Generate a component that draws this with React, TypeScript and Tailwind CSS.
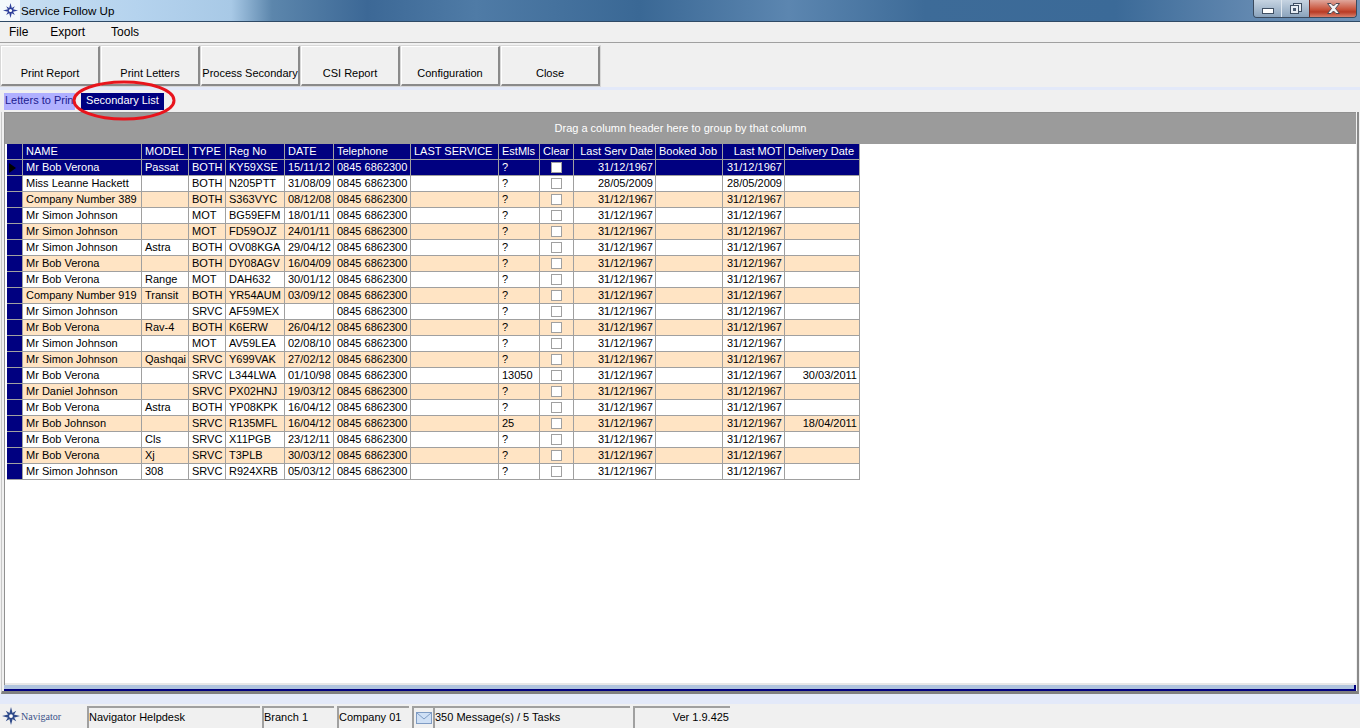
const rows = [
  ["Mr Bob Verona", "Passat", "BOTH", "KY59XSE", "15/11/12", "?", "31/12/1967", "31/12/1967", ""],
  ["Miss Leanne Hackett", "", "BOTH", "N205PTT", "31/08/09", "?", "28/05/2009", "28/05/2009", ""],
  ["Company Number 389", "", "BOTH", "S363VYC", "08/12/08", "?", "31/12/1967", "31/12/1967", ""],
  ["Mr Simon Johnson", "", "MOT", "BG59EFM", "18/01/11", "?", "31/12/1967", "31/12/1967", ""],
  ["Mr Simon Johnson", "", "MOT", "FD59OJZ", "24/01/11", "?", "31/12/1967", "31/12/1967", ""],
  ["Mr Simon Johnson", "Astra", "BOTH", "OV08KGA", "29/04/12", "?", "31/12/1967", "31/12/1967", ""],
  ["Mr Bob Verona", "", "BOTH", "DY08AGV", "16/04/09", "?", "31/12/1967", "31/12/1967", ""],
  ["Mr Bob Verona", "Range", "MOT", "DAH632", "30/01/12", "?", "31/12/1967", "31/12/1967", ""],
  ["Company Number 919", "Transit", "BOTH", "YR54AUM", "03/09/12", "?", "31/12/1967", "31/12/1967", ""],
  ["Mr Simon Johnson", "", "SRVC", "AF59MEX", "", "?", "31/12/1967", "31/12/1967", ""],
  ["Mr Bob Verona", "Rav-4", "BOTH", "K6ERW", "26/04/12", "?", "31/12/1967", "31/12/1967", ""],
  ["Mr Simon Johnson", "", "MOT", "AV59LEA", "02/08/10", "?", "31/12/1967", "31/12/1967", ""],
  ["Mr Simon Johnson", "Qashqai", "SRVC", "Y699VAK", "27/02/12", "?", "31/12/1967", "31/12/1967", ""],
  ["Mr Bob Verona", "", "SRVC", "L344LWA", "01/10/98", "13050", "31/12/1967", "31/12/1967", "30/03/2011"],
  ["Mr Daniel Johnson", "", "SRVC", "PX02HNJ", "19/03/12", "?", "31/12/1967", "31/12/1967", ""],
  ["Mr Bob Verona", "Astra", "BOTH", "YP08KPK", "16/04/12", "?", "31/12/1967", "31/12/1967", ""],
  ["Mr Bob Johnson", "", "SRVC", "R135MFL", "16/04/12", "25", "31/12/1967", "31/12/1967", "18/04/2011"],
  ["Mr Bob Verona", "Cls", "SRVC", "X11PGB", "23/12/11", "?", "31/12/1967", "31/12/1967", ""],
  ["Mr Bob Verona", "Xj", "SRVC", "T3PLB", "30/03/12", "?", "31/12/1967", "31/12/1967", ""],
  ["Mr Simon Johnson", "308", "SRVC", "R924XRB", "05/03/12", "?", "31/12/1967", "31/12/1967", ""],
]

const headers = [
  { label: "NAME", w: "w-[119px]", right: false },
  { label: "MODEL", w: "w-[47px]", right: false },
  { label: "TYPE", w: "w-[37px]", right: false },
  { label: "Reg No", w: "w-[59px]", right: false },
  { label: "DATE", w: "w-[49px]", right: false },
  { label: "Telephone", w: "w-[77px]", right: false },
  { label: "LAST SERVICE", w: "w-[88px]", right: false },
  { label: "EstMls", w: "w-[41px]", right: false },
  { label: "Clear", w: "w-[34px]", right: false },
  { label: "Last Serv Date", w: "w-[82px]", right: true },
  { label: "Booked Job", w: "w-[67px]", right: false },
  { label: "Last MOT", w: "w-[62px]", right: true },
  { label: "Delivery Date", w: "w-[75px]", right: false },
]

const toolbar = ["Print Report", "Print Letters", "Process Secondary", "CSI Report", "Configuration", "Close"]

function Cell({ w, right, children }: { w: string; right?: boolean; children?: React.ReactNode }) {
  return (
    <div
      className={`${w} h-full shrink-0 border-r border-b border-[#a0a0a0] pl-[3px] pr-[2px] leading-[15px] whitespace-nowrap overflow-hidden ${right ? "text-right" : ""}`}
    >
      {children}
    </div>
  )
}

function GridRow({ row, index }: { row: string[]; index: number }) {
  const selected = index === 0
  const bg = selected ? "bg-[#000080] text-white" : index % 2 === 0 ? "bg-[#ffe4c4] text-black" : "bg-white text-black"
  const [name, model, type, reg, date, est, serv, mot, delivery] = row
  return (
    <div className={`flex h-[16px] ${bg}`}>
      <div className="w-[16px] h-full shrink-0 bg-[#000080] border-r border-b border-[#a0a0a0] flex items-center pl-[2px]">
        {selected && (
          <svg width="7" height="10" viewBox="0 0 7 10">
            <path d="M0 0 L7 5 L0 10 Z" fill="#000" />
          </svg>
        )}
      </div>
      <Cell w="w-[119px]">{name}</Cell>
      <Cell w="w-[47px]">{model}</Cell>
      <Cell w="w-[37px]">{type}</Cell>
      <Cell w="w-[59px]">{reg}</Cell>
      <Cell w="w-[49px]">{date}</Cell>
      <Cell w="w-[77px]">0845 6862300</Cell>
      <Cell w="w-[88px]" />
      <Cell w="w-[41px]">{est}</Cell>
      <div className="w-[34px] h-full shrink-0 border-r border-b border-[#a0a0a0] flex items-center justify-center">
        <div className="w-[11px] h-[11px] bg-white border border-[#a0a0a0]" />
      </div>
      <Cell w="w-[82px]" right>
        {serv}
      </Cell>
      <Cell w="w-[67px]" />
      <Cell w="w-[62px]" right>
        {mot}
      </Cell>
      <Cell w="w-[75px]" right>
        {delivery}
      </Cell>
    </div>
  )
}

function Compass({ size, color }: { size: number; color: string }) {
  return (
    <svg width={size} height={size} viewBox="0 0 24 24">
      <path d="M12 0 L14.5 9.5 L24 12 L14.5 14.5 L12 24 L9.5 14.5 L0 12 L9.5 9.5 Z" fill={color} />
      <path d="M5 5 L12 9 L19 5 L15 12 L19 19 L12 15 L5 19 L9 12 Z" fill={color} />
      <circle cx="12" cy="12" r="2.5" fill="#fff" />
    </svg>
  )
}

export default function App() {
  return (
    <div className="relative w-[1360px] h-[728px] overflow-hidden flex flex-col bg-[#f0f0f0] font-['Liberation_Sans',Arial,sans-serif] text-[11px] text-black">
      {/* Title bar */}
      <div className="h-[21px] shrink-0 flex items-center justify-between bg-[linear-gradient(90deg,#c9dff2_0%,#b5d3ee_10%,#a8c9e6_17%,#5c86ac_20%,#3c6896_27%,#4f7ba6_35%,#3a6895_47%,#5c86b0_58%,#3d6b98_68%,#3b6a98_82%,#6288b0_92%,#6f93b8_100%)]">
        <div className="flex items-center h-full">
          <div className="w-[20px] h-full bg-white/80 flex items-center justify-center">
            <Compass size={15} color="#2f3f9a" />
          </div>
          <span className="ml-[1px] text-[11.6px]">Service Follow Up</span>
        </div>
        <div className="flex h-[18px] mr-[3px] self-start border border-t-0 border-[#3a4a5e] rounded-b-[4px] overflow-hidden">
          <div className="w-[28px] flex items-center justify-center border-r border-[#dfe7ef] bg-[linear-gradient(180deg,#c6d4e2,#8ba3bc)]">
            <svg width="12" height="6" viewBox="0 0 12 6" className="mt-[4px]">
              <rect x="0.5" y="0.5" width="11" height="5" fill="#fff" stroke="#3f4f63" />
            </svg>
          </div>
          <div className="w-[27px] flex items-center justify-center bg-[linear-gradient(180deg,#c6d4e2,#8ba3bc)]">
            <svg width="12" height="11" viewBox="0 0 12 11">
              <rect x="3.5" y="0.5" width="8" height="8" fill="#e8eef4" stroke="#3f4f63" />
              <rect x="0.5" y="2.5" width="8" height="8" fill="#e8eef4" stroke="#3f4f63" />
              <rect x="3" y="5" width="3" height="3" fill="#4b5c72" />
            </svg>
          </div>
          <div className="w-[47px] flex items-center justify-center border-l border-[#7a2a20] bg-[linear-gradient(180deg,#e0a79c,#c9543c_55%,#b83a24_70%,#d9806c)]">
            <svg width="13" height="11" viewBox="0 0 13 11">
              <path
                d="M0.5 0.5 H4 L6.5 3 L9 0.5 H12.5 L8.5 5.5 L12.5 10.5 H9 L6.5 8 L4 10.5 H0.5 L4.5 5.5 Z"
                fill="#f4f4f4"
                stroke="#4a4a55"
              />
            </svg>
          </div>
        </div>
      </div>
      <div className="h-px shrink-0 bg-[#2f4a66]" />

      {/* Menu */}
      <div className="h-[20px] shrink-0 flex items-center bg-[#f0f0f0] border-b border-[#a0a0a0] box-content text-[12px]">
        <span className="ml-[9px]">File</span>
        <span className="ml-[22px]">Export</span>
        <span className="ml-[26px]">Tools</span>
      </div>

      {/* Toolbar */}
      <div className="h-[44px] shrink-0 flex items-start pt-[3px] pl-[1px]">
        {toolbar.map((label) => (
          <div
            key={label}
            className="w-[99px] h-[40px] mr-[1px] bg-[#f0f0f0] border-t border-l border-white border-r-2 border-b-2 border-r-[#8a8a8a] border-b-[#8a8a8a] flex items-end justify-center pb-[3px] whitespace-nowrap shadow-[0_0_0_1px_#d8d8d8]"
          >
            {label}
          </div>
        ))}
      </div>
      <div className="h-[3px] shrink-0 bg-[#e3e9f9]" />

      {/* Tabs */}
      <div className="h-[22px] shrink-0 flex items-start pl-[4px] pt-[3px]">
        <div className="w-[71px] h-[17px] bg-[#b0b0ff] text-[#202090] leading-[15px] pl-[1px] whitespace-nowrap">Letters to Prin</div>
        <div className="w-[6px]" />
        <div className="w-[83px] h-[17px] bg-[#000080] text-white leading-[15px] text-center">Secondary List</div>
      </div>

      {/* Grid panel */}
      <div className="h-[582px] shrink-0 ml-[1px] mr-[1px] flex flex-col border-l border-[#c8c8c8] border-r-2 border-r-[#8a8a8a] border-b-[3px] border-b-[#808080] pl-[2px]">
        <div className="flex-1 flex flex-col min-h-0 bg-white border-l border-t border-[#909090] mr-[1px]">
          <div className="h-[31px] shrink-0 bg-[#9b9b9b] text-white flex items-center justify-center">
            Drag a column header here to group by that column
          </div>
          <div className="flex-1 pl-[2px] min-h-0">
            <div className="flex h-[16px] bg-[#000080] text-white w-[853px]">
              <div className="w-[16px] h-full shrink-0 border-r border-b border-[#a0a0a0]" />
              {headers.map((h) => (
                <Cell key={h.label} w={h.w} right={h.right}>
                  {h.label}
                </Cell>
              ))}
            </div>
            <div className="w-[853px]">
              {rows.map((row, i) => (
                <GridRow key={i} row={row} index={i} />
              ))}
            </div>
          </div>
          <div className="h-[2px] shrink-0 bg-[#e8e8e8]" />
        </div>
        <div className="h-[4px] shrink-0 bg-[#b0c4de] mr-[1px] border-r-2 border-[#000080]" />
        <div className="h-[2px] shrink-0 bg-[#000080] mr-[1px]" />
      </div>

      <div className="h-[10px] shrink-0 bg-[#e3e9f9]" />

      {/* Status bar */}
      <div className="flex-1 flex items-end bg-[#f0f0f0]">
        <div className="w-[87px] h-full flex items-center pl-[2px] gap-[1px]">
          <Compass size={18} color="#2f4a8a" />
          <span className="font-['Liberation_Serif',serif] text-[10px] text-[#3a5088]">Navigator</span>
        </div>
        <div className="w-[173px] h-[22px] border-t-2 border-l-2 border-[#a0a0a0] leading-[18px]">Navigator Helpdesk</div>
        <div className="w-[2px]" />
        <div className="w-[72px] h-[22px] border-t-2 border-l-2 border-[#a0a0a0] leading-[18px]">Branch 1</div>
        <div className="w-[3px]" />
        <div className="w-[72px] h-[22px] border-t-2 border-l-2 border-[#a0a0a0] leading-[18px]">Company 01</div>
        <div className="w-[3px]" />
        <div className="w-[21px] h-[22px] border-t-2 border-l-2 border-[#a0a0a0] flex items-center justify-center">
          <svg width="16" height="12" viewBox="0 0 16 12">
            <rect x="0.5" y="0.5" width="15" height="11" fill="#cfe0f5" stroke="#7f9cc4" />
            <path d="M1 1 L8 7 L15 1" fill="none" stroke="#7f9cc4" />
          </svg>
        </div>
        <div className="w-[197px] h-[22px] border-t-2 border-l-2 border-[#a0a0a0] leading-[18px]">350 Message(s) / 5 Tasks</div>
        <div className="w-[3px]" />
        <div className="w-[97px] h-[22px] border-t-2 border-l-2 border-[#a0a0a0] pr-[1px] leading-[18px] text-right">Ver 1.9.425</div>
      </div>

      {/* Red highlight drawn on top of the screenshot */}
      <svg className="absolute left-[72px] top-[80px] pointer-events-none" width="105" height="42" viewBox="0 0 105 42">
        <ellipse cx="52" cy="20.5" rx="50" ry="18.5" fill="none" stroke="#e8141c" strokeWidth="3" />
      </svg>
    </div>
  )
}
